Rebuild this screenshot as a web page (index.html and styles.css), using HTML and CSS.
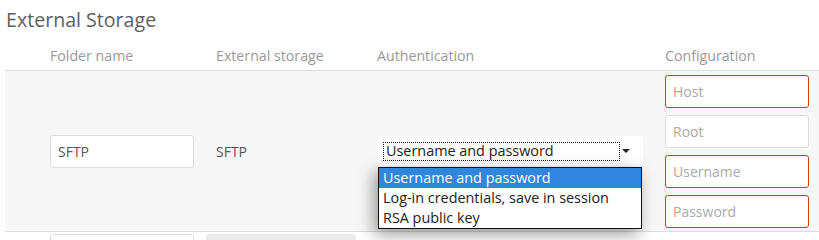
FILE: index.html
```html
<!DOCTYPE html>
<html lang="en">
<head>
  <meta charset="UTF-8">
  <title>External Storage</title>
  <link rel="stylesheet" href="styles.css">
</head>
<body>
  <div class="section">
    <h2 class="section-title">External Storage</h2>

    <div class="mounts">
      <!-- Header -->
      <div class="mount-row head">
        <div class="cell"></div>
        <div class="cell">Folder name</div>
        <div class="cell">External storage</div>
        <div class="cell">Authentication</div>
        <div class="cell">Configuration</div>
      </div>

      <!-- SFTP mount -->
      <div class="mount-row current">
        <div class="cell"></div>
        <div class="cell"><input class="text-input" type="text" value="SFTP"></div>
        <div class="cell backend">SFTP</div>
        <div class="cell">
          <div class="select-box">
            <div class="select-value">Username and password</div>
            <span class="select-arrow"></span>
            <ul class="select-list">
              <li class="selected">Username and password</li>
              <li>Log-in credentials, save in session</li>
              <li>RSA public key</li>
            </ul>
          </div>
        </div>
        <div class="cell config">
          <input class="text-input required" type="text" placeholder="Host">
          <input class="text-input" type="text" placeholder="Root">
          <input class="text-input required" type="text" placeholder="Username">
          <input class="text-input required" type="password" placeholder="Password">
        </div>
      </div>

      <!-- Add new mount -->
      <div class="mount-row new">
        <div class="cell"></div>
        <div class="cell"><input class="text-input" type="text"></div>
        <div class="cell"><div class="add-select"></div></div>
        <div class="cell"></div>
        <div class="cell"></div>
      </div>
    </div>
  </div>
</body>
</html>
```

FILE: styles.css
```css
/* General Reset */
* {
  margin: 0;
  padding: 0;
  box-sizing: border-box;
}

html,
body {
  height: 240px;
  overflow: hidden;
}

body {
  font-family: 'Open Sans', sans-serif;
  font-size: 14px;
  color: #555;
  background: #fff;
}

.section {
  padding: 5px 0 0 5px;
}

.section-title {
  font-size: 19.6px;
  font-weight: 400;
  line-height: 30px;
  color: #5e5e5e;
  padding-left: 1px;
}

/* Mount table */
.mount-row {
  display: grid;
  grid-template-columns: 45px 166px 161px 288px 1fr;
  border-bottom: 1px solid #ddd;
}

.mount-row .cell {
  display: flex;
  align-items: center;
}

.mount-row.head {
  height: 36px;
  color: #999;
  font-size: 14.2px;
  padding-top: 5px;
}

.mount-row.current {
  background: #f7f7f7;
  height: 161px;
}

.backend {
  color: #555;
}

/* Inputs */
.text-input {
  font-family: 'Open Sans', sans-serif;
  font-size: 14px;
  width: 144px;
  height: 33px;
  padding: 0 7px;
  color: #555;
  background: #fff;
  border: 1px solid #ddd;
  border-radius: 3px;
  outline: none;
}

.text-input::placeholder {
  color: #aaa;
}

.text-input.required {
  border-color: #d63c0c;
}

.config {
  flex-direction: column;
  align-items: flex-start !important;
  justify-content: flex-start !important;
  gap: 7px;
  padding-top: 4px;
}

/* Open select */
.select-box {
  position: relative;
  width: 265px;
  height: 30px;
  margin: 0 0 0 1px;
  background: #fff;
  border-radius: 3px;
  font-size: 14.4px;
}

.select-value {
  position: absolute;
  left: 5px;
  top: 6px;
  width: 237px;
  height: 19px;
  border: 1px dotted #222;
  color: #222;
  line-height: 16px;
  padding-left: 2px;
}

.select-arrow {
  position: absolute;
  left: 244px;
  top: 13px;
  border-left: 4px solid transparent;
  border-right: 4px solid transparent;
  border-top: 4px solid #222;
}

.select-list {
  position: absolute;
  left: 0;
  top: 31px;
  width: 264px;
  list-style: none;
  background: #fff;
  border: 1px solid #111;
  color: #222;
  box-shadow: -4px 5px 16px rgba(0, 0, 0, 0.4);
  z-index: 10;
}

.select-list li {
  height: 20px;
  line-height: 20px;
  padding-left: 4px;
}

.select-list li.selected {
  background: #3086dc;
  color: #fff;
}

/* New mount row */
.mount-row.new {
  border-bottom: none;
  height: 8px;
  overflow: hidden;
}

.mount-row.new .cell {
  align-items: flex-start;
  padding-top: 2px;
}

.add-select {
  width: 150px;
  height: 33px;
  margin-left: -10px;
  background: #ebebeb;
  border-radius: 3px;
}
```
